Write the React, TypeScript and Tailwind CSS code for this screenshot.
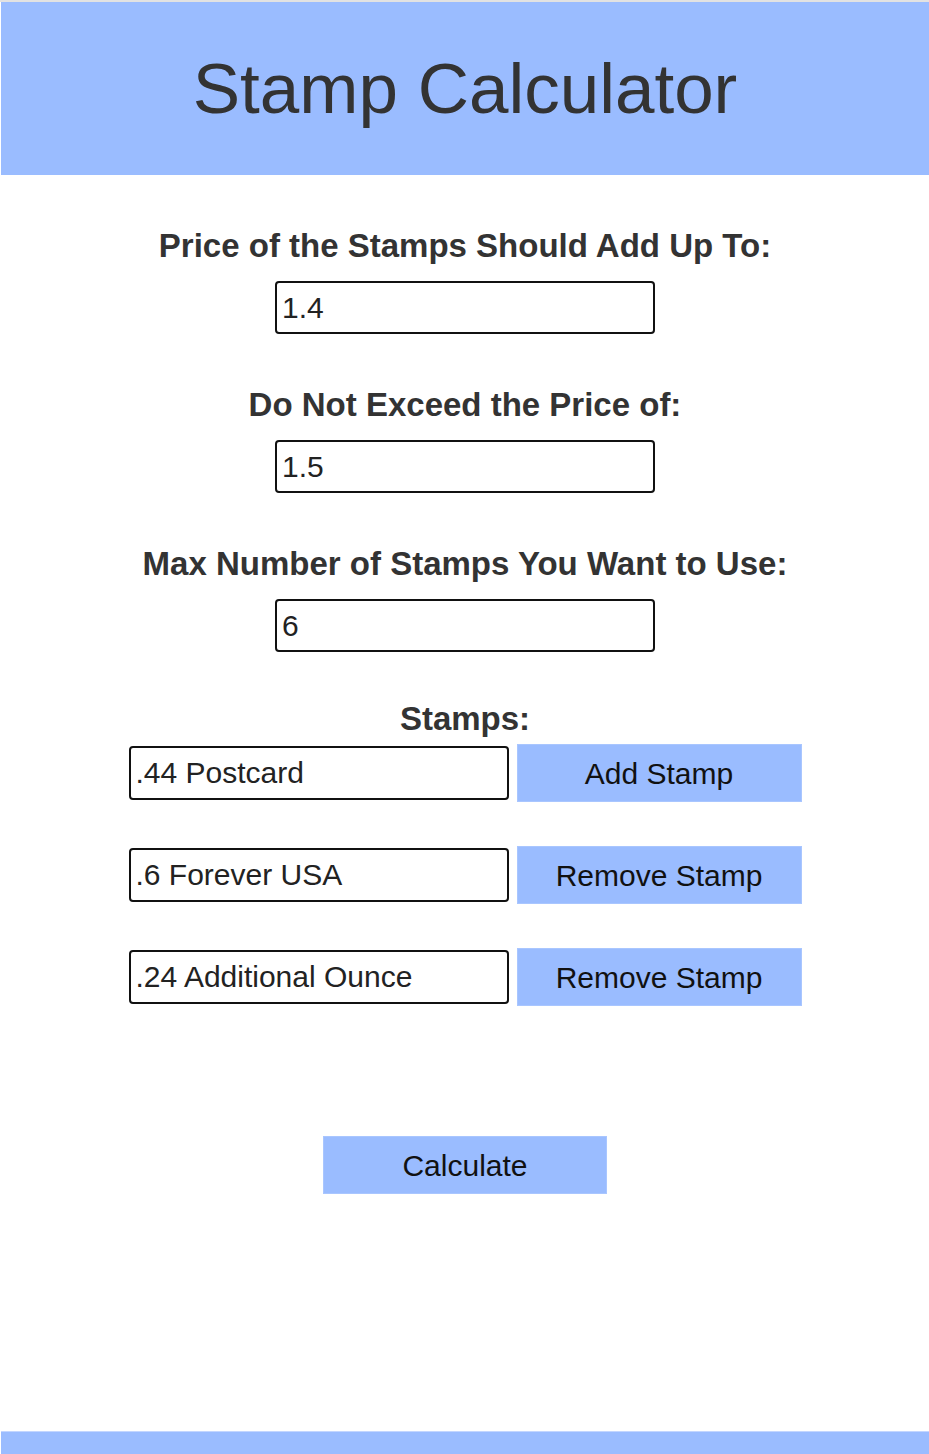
import React, { useState } from 'react';

const font = { fontFamily: '"Liberation Sans", Arial, sans-serif' };

const Field = ({ label, value }: { label: string; value: string }) => (
  <div className="mt-[52px] flex flex-col items-center">
    <h2 className="text-[33px] font-bold leading-[38px] text-[#333]">{label}</h2>
    <input
      defaultValue={value}
      className="mt-4 h-[53px] w-[380px] rounded-[4px] border-2 border-[#111] bg-white px-[5px] text-[30px] text-[#222] outline-none"
    />
  </div>
);

const StampRow = ({ value, action }: { value: string; action: string }) => (
  <div className="flex items-center gap-2">
    <input
      defaultValue={value}
      className="h-[54px] w-[380px] rounded-[4px] border-2 border-[#111] bg-white px-[5px] text-[30px] text-[#222] outline-none"
    />
    <button className="h-[58px] w-[285px] border border-[#a9c6ff] bg-[#9abcff] text-[30px] text-[#111]">
      {action}
    </button>
  </div>
);

export default function App() {
  const [stamps] = useState(['.44 Postcard', '.6 Forever USA', '.24 Additional Ounce']);

  return (
    <div style={font} className="flex min-h-screen flex-col border-t-2 border-[#e2e2e2] bg-white pl-px">
      <header className="flex h-[173px] items-center justify-center bg-[#9abcff]">
        <h1 className="text-[71px] leading-none text-[#333]">Stamp Calculator</h1>
      </header>

      <main className="flex flex-col items-center">
        <Field label="Price of the Stamps Should Add Up To:" value="1.4" />
        <Field label="Do Not Exceed the Price of:" value="1.5" />
        <Field label="Max Number of Stamps You Want to Use:" value="6" />

        <h2 className="mt-[48px] text-[33px] font-bold leading-[38px] text-[#333]">Stamps:</h2>
        <div className="mt-[6px] flex flex-col gap-11">
          {stamps.map((s, i) => (
            <StampRow key={s} value={s} action={i === 0 ? 'Add Stamp' : 'Remove Stamp'} />
          ))}
        </div>

        <button className="mt-[130px] h-[58px] w-[284px] border border-[#a9c6ff] bg-[#9abcff] text-[30px] text-[#111]">
          Calculate
        </button>
      </main>

      <footer className="mt-auto h-[23px] border-t border-[#c3d6ff] bg-[#9abcff]" />
    </div>
  );
}
